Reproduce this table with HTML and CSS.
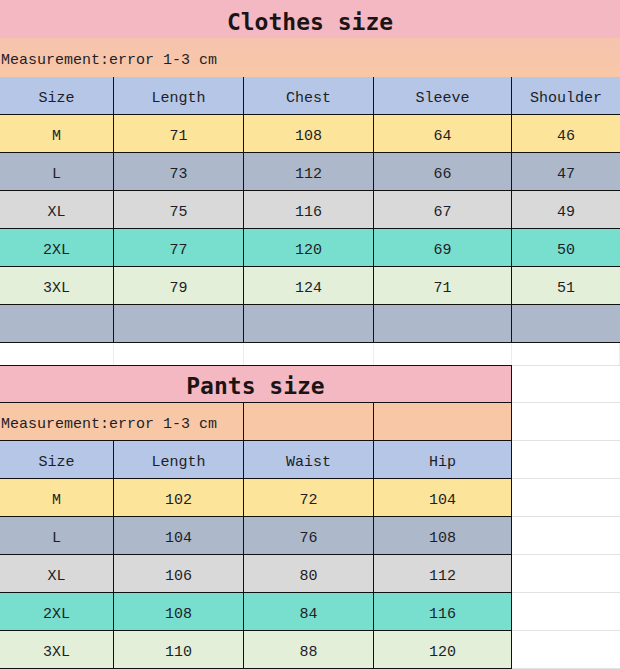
FILE: index.html
```html
<!DOCTYPE html>
<html>
<head>
<meta charset="utf-8">
<link rel="stylesheet" href="styles.css">
</head>
<body>
<div class="sheet">
  <div class="grid clothes">
    <div class="title span5">Clothes size</div>
    <div class="note span5">Measurement:error 1-3 cm</div>
    <div class="c hd">Size</div><div class="c hd">Length</div><div class="c hd">Chest</div><div class="c hd">Sleeve</div><div class="c hd last">Shoulder</div>
    <div class="c m">M</div><div class="c m">71</div><div class="c m">108</div><div class="c m">64</div><div class="c m last">46</div>
    <div class="c l">L</div><div class="c l">73</div><div class="c l">112</div><div class="c l">66</div><div class="c l last">47</div>
    <div class="c xl">XL</div><div class="c xl">75</div><div class="c xl">116</div><div class="c xl">67</div><div class="c xl last">49</div>
    <div class="c x2">2XL</div><div class="c x2">77</div><div class="c x2">120</div><div class="c x2">69</div><div class="c x2 last">50</div>
    <div class="c x3">3XL</div><div class="c x3">79</div><div class="c x3">124</div><div class="c x3">71</div><div class="c x3 last">51</div>
    <div class="c l"></div><div class="c l"></div><div class="c l"></div><div class="c l"></div><div class="c l last"></div>
    <div class="gap"></div><div class="gap"></div><div class="gap"></div><div class="gap"></div><div class="gap last"></div>
  </div>
  <div class="grid pants">
    <div class="title span4 ptitle">Pants size</div><div class="blank top"></div>
    <div class="c note span2">Measurement:error 1-3 cm</div><div class="c pe"></div><div class="c pe"></div><div class="blank"></div>
    <div class="c hd">Size</div><div class="c hd">Length</div><div class="c hd">Waist</div><div class="c hd">Hip</div><div class="blank"></div>
    <div class="c m">M</div><div class="c m">102</div><div class="c m">72</div><div class="c m">104</div><div class="blank"></div>
    <div class="c l">L</div><div class="c l">104</div><div class="c l">76</div><div class="c l">108</div><div class="blank"></div>
    <div class="c xl">XL</div><div class="c xl">106</div><div class="c xl">80</div><div class="c xl">112</div><div class="blank"></div>
    <div class="c x2">2XL</div><div class="c x2">108</div><div class="c x2">84</div><div class="c x2">116</div><div class="blank"></div>
    <div class="c x3">3XL</div><div class="c x3">110</div><div class="c x3">88</div><div class="c x3">120</div><div class="blank"></div>
  </div>
</div>
</body>
</html>
```

FILE: styles.css
```css
html, body {
  margin: 0;
  padding: 0;
  background: #ffffff;
}
.sheet {
  width: 620px;
  height: 669px;
  overflow: hidden;
  font-family: "Liberation Mono", "DejaVu Sans Mono", monospace;
  font-size: 15px;
  color: #1e1e28;
}
.grid {
  display: grid;
  grid-template-columns: 114px 130px 130px 138px 108px;
}
.clothes {
  grid-template-rows: 38px 39px repeat(7, 38px) 22px;
}
.pants {
  grid-template-rows: 38px repeat(7, 38px);
}
.title {
  display: flex;
  align-items: center;
  justify-content: center;
  background: #f3b8c2;
  font-family: "DejaVu Sans Mono", monospace;
  font-weight: bold;
  font-size: 23px;
  color: #1a1414;
  padding-top: 5px;
  box-sizing: border-box;
}
.span5 { grid-column: span 5; }
.span4 { grid-column: span 4; }
.span2 { grid-column: span 2; }
.note {
  display: flex;
  align-items: center;
  background: #f8c8a6;
  padding-left: 1px;
  padding-top: 6px;
  box-sizing: border-box;
  white-space: nowrap;
}
.clothes .note {
  background: linear-gradient(#f6c3ae, #f8c8a6);
  padding-top: 5px;
}
.c {
  display: flex;
  align-items: center;
  justify-content: center;
  padding-top: 5px;
  border-right: 1px solid #111;
  border-bottom: 1px solid #111;
  box-sizing: border-box;
}
.c.note {
  justify-content: flex-start;
  padding-top: 5px;
}
.last { border-right: none; }
.hd { background: #b5c6e6; }
.m { background: #fce49a; }
.l { background: #adb9ca; }
.xl { background: #d9d9d9; }
.x2 { background: #78dfcf; }
.x3 { background: #e3efd9; }
.pe { background: #f8c8a6; }
.gap {
  border-right: 1px solid #ececec;
}
.ptitle {
  border-top: 1px solid #111;
  border-right: 1px solid #111;
  border-bottom: 1px solid #111;
  padding-top: 4px;
}
.blank {
  border-bottom: 1px solid #e2e2e2;
  box-sizing: border-box;
}
.blank.top {
  border-top: 1px solid #e2e2e2;
}
```
